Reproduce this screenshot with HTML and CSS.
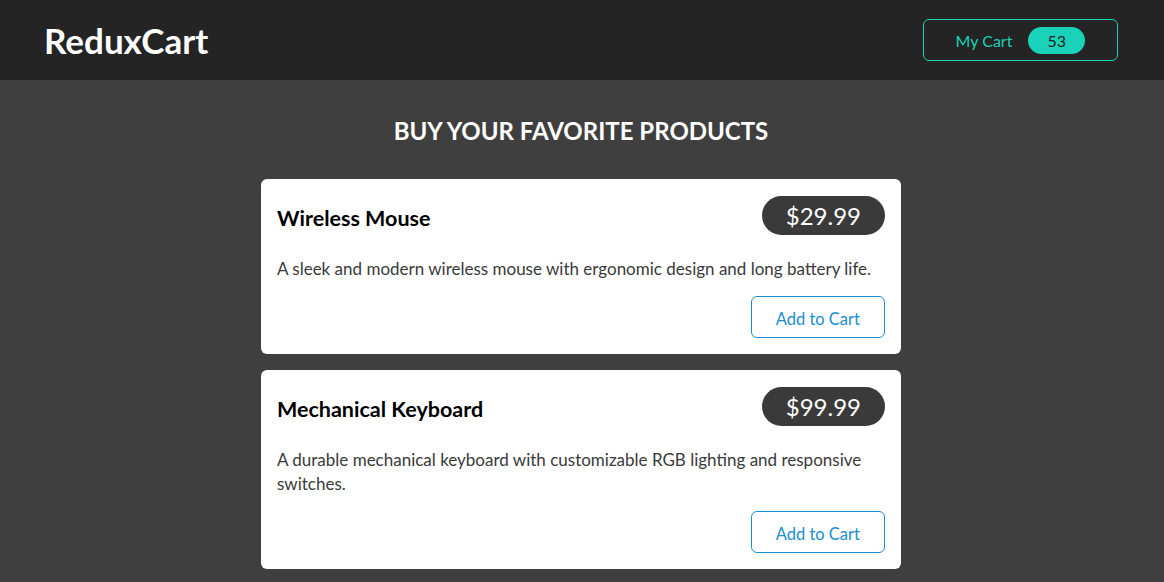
FILE: index.html
```html
<!DOCTYPE html>
<html lang="en">
<head>
<meta charset="utf-8">
<title>ReduxCart</title>
<link rel="stylesheet" href="styles.css">
</head>
<body>
<header class="header">
  <h1 class="logo">ReduxCart</h1>
  <button class="cart-button">
    <span>My Cart</span>
    <span class="badge">53</span>
  </button>
</header>
<main class="main">
  <section class="products">
    <h2 class="products-title">BUY YOUR FAVORITE PRODUCTS</h2>
    <ul class="product-list">
      <li class="card">
        <div class="item-header">
          <h3 class="item-title">Wireless Mouse</h3>
          <div class="price">$29.99</div>
        </div>
        <p class="item-desc">A sleek and modern wireless mouse with ergonomic design and long battery life.</p>
        <div class="actions"><button class="add-button">Add to Cart</button></div>
      </li>
      <li class="card">
        <div class="item-header">
          <h3 class="item-title">Mechanical Keyboard</h3>
          <div class="price">$99.99</div>
        </div>
        <p class="item-desc">A durable mechanical keyboard with customizable RGB lighting and responsive switches.</p>
        <div class="actions"><button class="add-button">Add to Cart</button></div>
      </li>
    </ul>
  </section>
</main>
</body>
</html>
```
FILE: styles.css
```css
* { box-sizing: border-box; }
html, body { margin: 0; padding: 0; }
body {
  font-family: "Lato", "Noto Sans", sans-serif;
  background-color: #3f3f3f;
  color: #333;
  font-size: 16px;
}
.header {
  height: 80px;
  background-color: #252424;
  display: flex;
  justify-content: space-between;
  align-items: center;
  padding: 0 46px 0 44px;
}
.logo {
  margin: 0;
  color: #fff;
  font-size: 35px;
  font-weight: 700;
  line-height: 40px;
}
.cart-button {
  font: inherit;
  background: transparent;
  border: 1px solid #1ad1b9;
  color: #1ad1b9;
  border-radius: 6px;
  padding: 0 32px 0 32px;
  height: 42px;
  display: flex;
  align-items: center;
  cursor: pointer;
}
.badge {
  margin-left: 16px;
  background-color: #1ad1b9;
  color: #1d1d1d;
  border-radius: 30px;
  padding: 0 19px;
  height: 27px;
  line-height: 27px;
}
.main { padding: 0 2px 16px 0; }
.products-title {
  margin: 36px 0 33px;
  text-align: center;
  color: #fff;
  font-size: 24px;
  line-height: 30px;
  font-weight: 700;
}
.product-list {
  list-style: none;
  margin: 0;
  padding: 0;
  display: flex;
  flex-direction: column;
  gap: 16px;
  align-items: center;
}
.card {
  width: 640px;
  background: #fff;
  border-radius: 6px;
  padding: 16px;
}
.item-header {
  height: 40px;
  display: flex;
  justify-content: space-between;
  align-items: center;
}
.item-title {
  margin: 0;
  font-size: 21.5px;
  font-weight: 700;
  color: #000;
  padding-top: 5px;
}
.price {
  height: 39px;
  line-height: 39px;
  padding: 0 24px;
  border-radius: 30px;
  background-color: #3a3a3a;
  color: #fff;
  font-size: 24px;
}
.item-desc {
  margin: 22px 0 15px;
  font-size: 17px;
  line-height: 24px;
  color: #3a3a3a;
}
.actions {
  display: flex;
  justify-content: flex-end;
}
.add-button {
  font: inherit;
  font-size: 16.5px;
  background: transparent;
  border: 1px solid #1a8ed1;
  color: #1a8ed1;
  border-radius: 6px;
  height: 42px;
  padding: 3px 24px 0;
  cursor: pointer;
}
```
